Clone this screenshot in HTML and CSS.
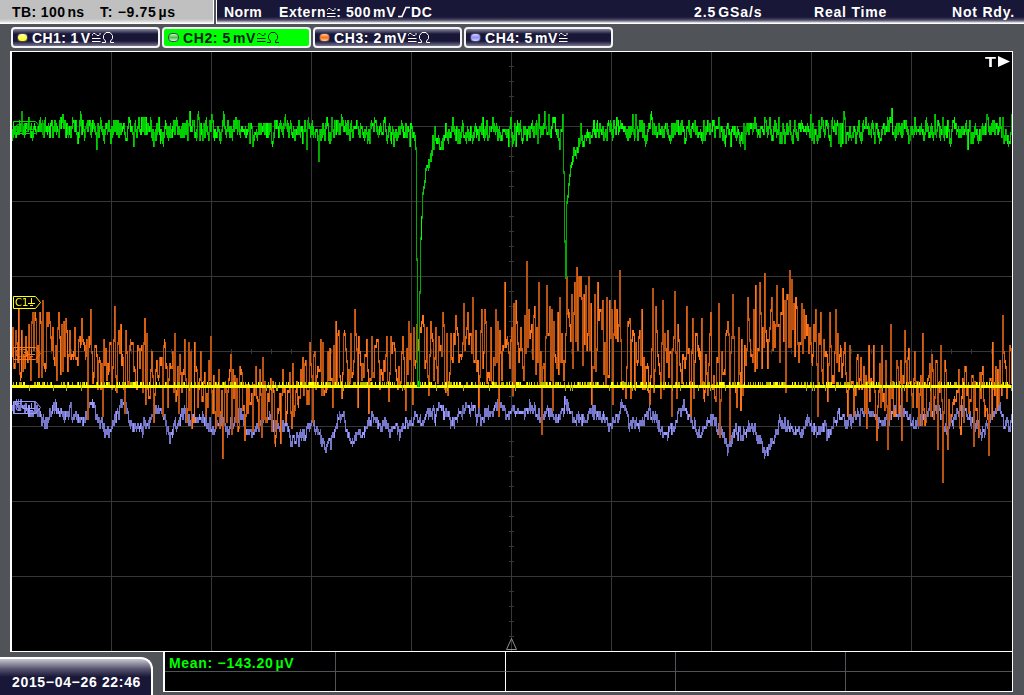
FILE: index.html
```
<!DOCTYPE html>
<html>
	<head>
		<title>Oscilloscope</title>
		<meta charset="UTF-8">
		<link rel="stylesheet" href="styles.css">
	</head>
	<body>
		<svg width="0" height="0" class="defs">
			<symbol id="couple" viewBox="0 0 9 11">
				<path d="M.5 3.500V2.500L1.500 1.500H3L5 3.500H7L8 2.500V1M0 6.500H8.500M0 9.500H8.500" />
			</symbol>
			<symbol id="ohm" viewBox="0 0 12 12">
				<path d="M0 10.500H3.500V9L1.500 6.500V3.500L4 .5H8L10.500 3.500V6.500L8.500 9V10.500H12" />
			</symbol>
		</svg>
		<div class="topbar">
			<div class="timebase"><span class="tb">TB: 100<i></i>ns</span><span class="tpos">T: −9.75<i></i>µs</span></div>
			<div class="trigger">
				<span class="norm">Norm</span>
				<span class="extern">Extern<svg class="sym" width="9" height="11"><use href="#couple" /></svg>: 500<i></i>mV<svg class="edge" width="13" height="12"><path d="M0 10.500H4L8 1.500H12" /></svg>DC</span>
				<span class="rate">2.5<i></i>GSa/s</span>
				<span class="mode">Real Time</span>
				<span class="state">Not Rdy.</span>
			</div>
		</div>
		<div class="channels">
			<div class="ch ch1"><b class="led"></b><span>CH1: 1<i></i>V</span><svg class="sym" width="9" height="11"><use href="#couple" /></svg><svg class="sym" width="12" height="12"><use href="#ohm" /></svg></div>
			<div class="ch ch2"><b class="led"></b><span>CH2: 5<i></i>mV</span><svg class="sym" width="9" height="11"><use href="#couple" /></svg><svg class="sym" width="12" height="12"><use href="#ohm" /></svg></div>
			<div class="ch ch3"><b class="led"></b><span>CH3: 2<i></i>mV</span><svg class="sym" width="9" height="11"><use href="#couple" /></svg><svg class="sym" width="12" height="12"><use href="#ohm" /></svg></div>
			<div class="ch ch4"><b class="led"></b><span>CH4: 5<i></i>mV</span><svg class="sym" width="9" height="11"><use href="#couple" /></svg></div>
		</div>
		<div class="screen">
			<canvas id="scope" width="1000" height="599"></canvas>
			<svg class="markers" width="1000" height="599" viewBox="12 52 1000 599">
				<g class="m2"><path d="M13.500 121.500H35.500L40.500 127.500L35.500 133.500H13.500Z" /><text x="15" y="132">C2</text><path d="M31.500 123V129M28 129.500H35M30 131.500H33" /></g>
				<g class="m1"><path d="M13.500 296.500H35.500L40.500 302.500L35.500 308.500H13.500Z" /><text x="15" y="306">C1</text><path d="M31.500 298V303M28 303.500H35M30 305.500H33" /></g>
				<g class="m3"><path d="M13.500 347.500H35.500L40.500 353.500L35.500 359.500H13.500Z" /><text x="15" y="357">C3</text><path d="M31.500 349V354M28 354.500H35M30 356.500H33" /></g>
				<g class="m4"><path d="M13.500 401.500H35.500L40.500 407.500L35.500 413.500H13.500Z" /><text x="15" y="411">C4</text><path d="M31.500 403V408M28 408.500H35M30 410.500H33" /></g>
				<path class="zero" d="M511.500 638.500L506.500 649.500H516.500Z" />
				<text class="trig" x="985" y="67" textLength="11" lengthAdjust="spacingAndGlyphs">T</text>
				<path class="arrow" d="M998 56V67L1010 61.500Z" />
			</svg>
		</div>
		<div class="bottom">
			<div class="clock">2015−04−26 22:46</div>
			<div class="measure">
				<div class="mean"><span>Mean: −143.20<i></i>µV</span></div><div></div><div></div><div></div><div></div>
				<div></div><div></div><div></div><div></div><div></div>
			</div>
		</div>
		<script src="scope.js"></script>
	</body>
</html>
```
FILE: styles.css
```
body{
	margin: 0;
	width: 1024px;
	height: 695px;
	overflow: hidden;
	background-color: #505458;
	font-family: "Liberation Sans", Arial, sans-serif;
	font-size: 14px;
	font-weight: bold;
	letter-spacing: 0.4px;
	color: white;
	white-space: nowrap;
}
i{
	display: inline-block;
	width: 2px;
}
.defs{
	display: block;
}
.defs path, .edge path{
	fill: none;
	stroke: currentColor;
}
.sym{
	fill: none;
	stroke: currentColor;
	vertical-align: -1px;
	margin-left: 1px;
}
.topbar{
	display: flex;
	gap: 2px;
	height: 24px;
	line-height: 24px;
}
.timebase{
	box-sizing: border-box;
	width: 214px;
	height: 24px;
	padding-left: 12px;
	background: linear-gradient(#c0c0c0 19px, #e0e0e0 22px, white 23px);
	border-right: 1px solid white;
	color: black;
	display: flex;
}
.tb{
	width: 88px;
}
.tpos{
	letter-spacing: 0.7px;
}
.trigger{
	box-sizing: border-box;
	width: 808px;
	height: 24px;
	padding-left: 7px;
	border-left: 1px solid white;
	background: linear-gradient(#191737 17px, #4b4965 20px, #b0afbd 22px, white 23px);
	display: flex;
}
.norm{
	width: 55px;
}
.extern{
	width: 415px;
	letter-spacing: 0.6px;
}
.edge{
	margin-left: 2px;
	vertical-align: -1px;
}
.edge path{
	stroke-width: 1.6;
}
.rate{
	width: 120px;
	letter-spacing: 0.9px;
}
.mode{
	width: 138px;
	letter-spacing: 0.8px;
}
.state{
	letter-spacing: 0.8px;
}
.channels{
	display: flex;
	gap: 2px;
	padding: 3px 0 0 11px;
	height: 24px;
}
.ch{
	box-sizing: border-box;
	width: 149px;
	height: 21px;
	border: 2px solid #f4f4f8;
	border-radius: 4px;
	background: linear-gradient(#85849a, #191737 5px, #191737 12px, #77768e);
	display: flex;
	align-items: center;
	padding-left: 4px;
}
.ch2, .ch3, .ch4{
	letter-spacing: 0.6px;
}
.ch2{
	background: #00ff00;
	color: #051d16;
}
.led{
	box-sizing: border-box;
	width: 11px;
	height: 9px;
	margin-right: 4px;
	border: 1px solid #44445a;
	border-radius: 4px;
}
.ch1 .led{
	background: linear-gradient(#ffffb0, #ffff00);
}
.ch2 .led{
	background: linear-gradient(#b8ffb8, #50c050, #d0ffd0);
}
.ch3 .led{
	background: linear-gradient(#ffc8a0, #ff7010, #ffc8a0);
}
.ch4 .led{
	background: linear-gradient(#d0d0ff, #9090ff, #d0d0ff);
}
.screen{
	position: relative;
	width: 1000px;
	height: 599px;
	margin-left: 10px;
	border: solid white;
	border-width: 1px 1px 1px 2px;
	background-color: black;
}
.screen canvas{
	display: block;
}
.markers{
	position: absolute;
	top: 0;
	left: 0;
	fill: none;
}
.markers g text{
	font-family: "DejaVu Sans", sans-serif;
	font-size: 10px;
	font-weight: normal;
	letter-spacing: 0;
	stroke: none;
}
.m1{
	stroke: #ffff00;
}
.m1 text{
	fill: #ffff00;
}
.m2{
	stroke: #00dc00;
}
.m2 text{
	fill: #00dc00;
}
.m3{
	stroke: #ff761a;
}
.m3 text{
	fill: #ff761a;
}
.m4{
	stroke: #9c9cff;
}
.m4 text{
	fill: #9c9cff;
}
.zero{
	stroke: #909090;
}
.trig{
	fill: white;
	font-size: 15px;
	letter-spacing: 0;
}
.arrow{
	fill: white;
}
.bottom{
	display: flex;
	align-items: flex-start;
	height: 43px;
}
.clock{
	box-sizing: border-box;
	width: 153px;
	height: 38px;
	margin: 5px 10px 0 0;
	padding: 8px 0 0 12px;
	line-height: 31px;
	letter-spacing: 0.67px;
	border-top: 2px solid white;
	border-right: 2px solid white;
	border-radius: 0 12px 0 0;
	background: linear-gradient(#c8c8d0, #55536d 10px, #191737 18px);
}
.measure{
	box-sizing: border-box;
	width: 850px;
	height: 40px;
	display: grid;
	grid-template-columns: 171px 170px 170px 170px 1fr;
	grid-template-rows: 20px 1fr;
	background-color: black;
	border: solid white;
	border-width: 0 1px 1px 2px;
}
.measure div{
	border-right: 1px solid #505458;
}
.measure div:nth-child(-n+5){
	border-bottom: 1px solid #505458;
}
.measure div:nth-child(5n+2){
	border-right-color: white;
}
.measure div:nth-child(5n){
	border-right: none;
}
.mean{
	padding-left: 4px;
	line-height: 22px;
	letter-spacing: 0.7px;
	color: #00ff00;
}
```
FILE: scope.js
```
var ctx = document.getElementById("scope").getContext("2d");
ctx.translate(-12, -52);

// small seeded generator so the noise is the same on each load
var seed = 4711;
function rnd(){
	seed = (seed * 16807) % 2147483647;
	return seed / 2147483647;
}

// linear interpolation in a flat list x, y, x, y ...
function at(keys, x){
	for(var i = 2; i < keys.length; i += 2){
		if(x <= keys[i]){
			var t = (x - keys[i-2]) / (keys[i] - keys[i-2]);
			return keys[i-1] + (keys[i+1] - keys[i-1]) * t;
		}
	}
	return keys[keys.length-1];
}

function drawGrid(){
	ctx.fillStyle = "#373737";
	for(var x = 111; x < 1000; x += 100) ctx.fillRect(x, 52, 1, 599);
	for(var y = 126; y < 650; y += 75) ctx.fillRect(12, y, 1000, 1);
	for(x = 31; x < 1010; x += 20) ctx.fillRect(x, 349, 1, 5);
	for(y = 66; y < 640; y += 15) ctx.fillRect(509, y, 5, 1);
}

// each column joins the previous sample to this one, long jumps are dimmer
function drawTrace(v, colors, step, spread){
	for(var x = 12; x < 1012; x++){
		var a = Math.round(v[x-1] / 3) * 3;
		var b = Math.round(v[x] / 3) * 3;
		var top = Math.min(a, b);
		var h = Math.abs(a - b) + 3;
		if(h < 12){
			if(rnd() < spread){
				top -= 3;
				h += 3;
			}
			if(rnd() < spread) h += 3;
		}
		var c = h > step * 3 ? 2 : (h > step ? 1 : 0);
		if(rnd() < 0.25) c = Math.floor(rnd() * 3);
		ctx.fillStyle = colors[c];
		ctx.fillRect(x, top, 1, h);
	}
}

var blueKeys = [11,406, 20,402, 27,412, 35,408, 45,424, 52,407, 62,412, 70,408, 77,420, 85,415, 90,399, 97,415, 106,432, 113,421, 122,403, 130,422, 140,426, 148,421, 157,406, 163,416, 169,435, 176,424, 183,411, 190,422, 194,414, 203,419, 213,425, 222,419, 228,429, 234,418, 240,409, 246,428, 252,432, 258,423, 266,415, 275,425, 280,428, 285,422, 290,440, 300,435, 305,432, 311,419, 317,431, 324,445, 332,438, 336,420, 343,414, 347,433, 354,441, 362,432, 367,425, 372,416, 379,429, 384,418, 388,432, 395,422, 400,430, 404,420, 410,425, 416,413, 422,420, 428,411, 434,416, 441,406, 451,422, 460,410, 466,404, 475,412, 480,418, 485,414, 493,410, 499,398, 505,418, 512,408, 518,414, 530,406, 540,415, 548,412, 557,418, 564,401, 572,418, 585,420, 592,411, 600,414, 607,423, 615,418, 622,403, 628,420, 640,424, 647,412, 654,415, 662,432, 673,425, 683,403, 692,424, 697,433, 703,427, 710,416, 718,425, 727,446, 735,428, 741,436, 748,422, 755,432, 764,451, 772,440, 780,420, 790,428, 800,431, 808,421, 818,429, 822,425, 828,432, 838,409, 845,420, 855,413, 862,415, 870,408, 878,420, 886,420, 893,410, 903,410, 913,426, 922,416, 930,408, 938,406, 944,432, 953,420, 960,405, 970,417, 982,433, 990,415, 998,404, 1005,424, 1011,418];

var orangeHi = [11,330, 50,320, 80,345, 110,335, 140,345, 170,355, 200,350, 220,375, 240,380, 260,375, 285,385, 300,375, 320,350, 340,340, 370,345, 400,350, 420,330, 460,325, 510,315, 540,320, 580,300, 610,315, 640,335, 680,335, 720,345, 750,320, 770,300, 795,300, 820,335, 850,350, 880,365, 900,360, 930,365, 960,375, 985,385, 1000,365, 1011,355];
var orangeLo = [11,365, 50,372, 80,385, 110,380, 140,395, 170,410, 220,420, 240,430, 285,425, 300,400, 320,390, 340,375, 400,385, 420,375, 460,385, 480,378, 540,380, 580,365, 610,380, 640,390, 680,390, 720,398, 750,385, 770,352, 795,352, 820,370, 850,400, 880,415, 900,410, 930,420, 985,430, 1000,390, 1011,390];
var orangeSpikes = [14,366, 18,310, 30,378, 32,313, 38,375, 42,301, 48,311, 56,379, 58,311, 65,319, 81,319, 87,418, 90,310, 102,414, 114,307, 120,323, 124,410, 144,319, 146,334, 153,420, 163,346, 174,334, 184,338, 191,426, 210,337, 222,457, 230,355, 239,367, 244,438, 252,430, 262,358, 265,420, 274,441, 280,441, 282,368, 291,427, 292,364, 302,358, 309,343, 312,420, 314,352, 322,343, 332,405, 335,322, 338,331, 341,396, 343,334, 350,332, 354,308, 357,406, 358,335, 366,340, 368,412, 371,337, 386,337, 388,399, 390,335, 405,408, 408,321, 412,402, 416,324, 422,316, 428,393, 430,320, 442,312, 447,394, 455,314, 463,302, 467,312, 472,298, 478,406, 481,310, 484,308, 495,310, 498,415, 504,281, 512,393, 515,299, 526,262, 538,281, 541,433, 546,286, 552,409, 559,298, 566,277, 574,283, 576,268, 578,277, 580,277, 585,284, 588,275, 591,403, 597,281, 602,300, 606,296, 609,301, 612,403, 614,299, 619,271, 625,397, 630,397, 641,308, 649,403, 652,287, 655,307, 660,397, 662,301, 671,415, 674,292, 686,307, 690,415, 692,318, 701,319, 703,396, 707,394, 710,313, 718,304, 719,436, 727,320, 729,438, 732,295, 736,406, 738,326, 740,409, 747,296, 755,284, 756,367, 759,283, 764,274, 767,367, 771,298, 776,286, 782,289, 785,391, 789,271, 791,280, 795,298, 805,316, 815,310, 817,415, 820,313, 827,400, 829,313, 835,310, 844,341, 847,413, 853,413, 857,353, 866,427, 868,346, 873,346, 876,439, 881,346, 887,448, 890,325, 901,439, 904,331, 908,349, 914,352, 921,424, 922,334, 931,355, 937,447, 940,346, 942,481, 945,368, 947,448, 958,370, 959,426, 973,445, 982,367, 988,454, 992,343, 1002,316, 1009,346];

var greenKeys = [11,128, 413,128, 414,130, 415,148, 416,258, 417,384, 418,384, 419,289, 420,238, 421,214, 422,192, 424,180, 425,168, 427,165, 430,157, 432,147, 437,144, 441,141, 447,134, 480,130, 562,128, 563,169, 564,241, 565,274, 566,199, 567,193, 569,175, 570,165, 572,155, 575,150, 578,144, 582,140, 590,134, 605,129, 1011,129];
var greenSpikes = [21,112, 62,115, 80,115, 96,147, 133,144, 153,144, 189,112, 211,115, 252,144, 306,147, 318,158, 393,144, 409,144, 432,136, 434,127, 445,124, 515,144, 538,115, 544,112, 559,147, 562,115, 580,124, 632,115, 635,115, 650,114, 730,145, 744,146, 810,114, 843,112, 891,109, 908,141, 967,146, 986,114];

drawGrid();

var blue = [], orange = [], green = [];
for(var x = 11; x < 1012; x++){
	blue[x] = at(blueKeys, x) + (rnd() + rnd() - 1) * 8;
	if(x > 11 && rnd() < 0.05) orange[x] = orange[x-1];
	else{
		var hi = at(orangeHi, x) - 12, lo = at(orangeLo, x) + 8;
		orange[x] = hi + (lo - hi) * rnd();
	}
	var base = at(greenKeys, x);
	var amp = base > 150 ? 3 : (base > 136 ? 9 : 15);
	green[x] = base + (rnd() + rnd() - 1) * amp;
}
for(var i = 0; i < orangeSpikes.length; i += 2) orange[orangeSpikes[i]] = orangeSpikes[i+1];
for(i = 0; i < greenSpikes.length; i += 2) green[greenSpikes[i]] = greenSpikes[i+1];

drawTrace(blue, ["#9c9cff", "#7878cc", "#6868b0"], 5, 0.2);
drawTrace(orange, ["#ff761a", "#d96010", "#b85212"], 12, 0.2);

// yellow: flat line with one step of dither
ctx.fillStyle = "#ffff00";
ctx.fillRect(12, 385, 1000, 3);
for(x = 12; x < 1012; x++){
	var r = rnd();
	ctx.fillStyle = r < 0.15 ? "#ffff00" : "#b4b400";
	if(r < 0.45) ctx.fillRect(x, 382, 1, 3);
	else if(r > 0.96) ctx.fillRect(x, 385, 1, 6);
}

drawTrace(green, ["#00ff00", "#00d000", "#00a800"], 6, 0.45);
```
